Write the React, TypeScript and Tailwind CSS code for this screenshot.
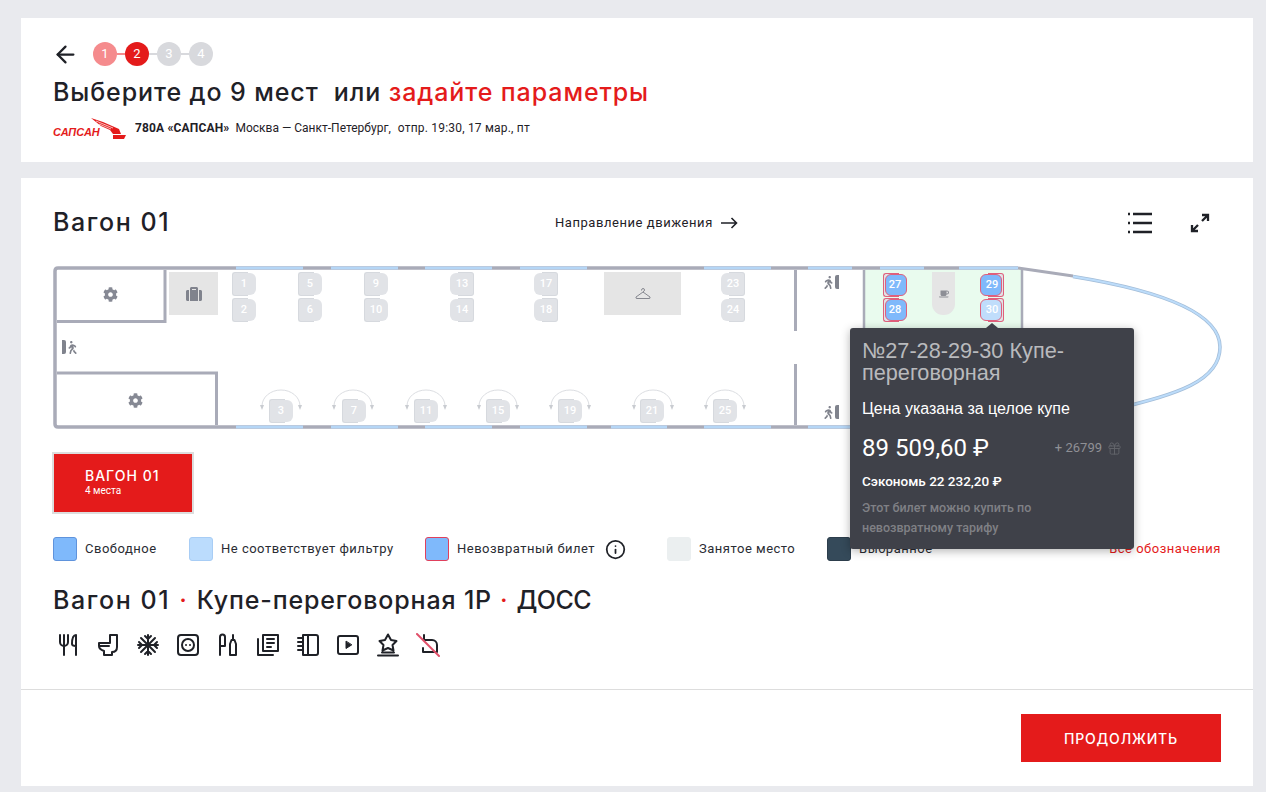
import { FaCog, FaSuitcase, FaWalking, FaCoffee } from "react-icons/fa";
import { ArrowLeft, Gift, Info } from "lucide-react";

const topWindows = [[236, 303], [331, 398], [425, 492], [520, 587], [704, 771], [808, 852], [880, 924], [959, 1018]];
const bottomWindows = [[236, 303], [331, 398], [425, 492], [520, 587], [611, 667], [704, 771], [808, 852]];

type SeatData = { n: number; x: number; y: number; back: "left" | "right"; kind?: "free" | "dim" };

const seats: SeatData[] = [
  { n: 1, x: 232, y: 272, back: "left" },
  { n: 2, x: 232, y: 298, back: "left" },
  { n: 5, x: 298, y: 272, back: "left" },
  { n: 6, x: 298, y: 298, back: "left" },
  { n: 9, x: 364, y: 272, back: "left" },
  { n: 10, x: 364, y: 298, back: "left" },
  { n: 13, x: 450, y: 272, back: "right" },
  { n: 14, x: 450, y: 298, back: "right" },
  { n: 17, x: 534, y: 272, back: "right" },
  { n: 18, x: 534, y: 298, back: "right" },
  { n: 23, x: 721, y: 272, back: "right" },
  { n: 24, x: 721, y: 298, back: "right" },
  { n: 3, x: 269, y: 399, back: "left" },
  { n: 7, x: 342, y: 399, back: "left" },
  { n: 11, x: 414, y: 399, back: "left" },
  { n: 15, x: 486, y: 399, back: "left" },
  { n: 19, x: 558, y: 399, back: "left" },
  { n: 21, x: 640, y: 399, back: "left" },
  { n: 25, x: 713, y: 399, back: "left" },
  { n: 27, x: 883, y: 273, back: "left", kind: "free" },
  { n: 28, x: 883, y: 298, back: "left", kind: "free" },
  { n: 29, x: 980, y: 273, back: "right", kind: "free" },
  { n: 30, x: 980, y: 298, back: "right", kind: "dim" },
];

function Seat({ seat }: { seat: SeatData }) {
  const free = seat.kind === "free";
  const dim = seat.kind === "dim";
  const body = free ? "bg-[#7fb9fb]" : dim ? "bg-[#c0ddfb]" : "bg-[#e1e3e7]";
  const back = free || dim ? "border-[#e0607c]" : "border-[#d6d9de]";
  return (
    <div
      className="absolute w-[24px] h-[24px]"
      style={{ left: seat.x - 53, top: seat.y - 266 }}
    >
      <div className={`absolute top-0 bottom-0 w-[16px] border ${back} ${seat.back === "left" ? "left-0 rounded-l-[3px] border-r-0" : "right-0 rounded-r-[3px] border-l-0"} bg-[#e1e3e7]`} />
      <div className={`absolute top-[1px] bottom-[1px] w-[22px] rounded-[6px] ${free || dim ? "border border-[#e0607c]" : ""} ${body} ${seat.back === "left" ? "right-0" : "left-0"}`} />
      <div className="absolute inset-0 flex items-center justify-center text-white text-[11px] font-['Roboto',sans-serif] font-medium">
        {seat.n}
      </div>
    </div>
  );
}

function SwingArc({ x }: { x: number }) {
  return (
    <g fill="none" stroke="#dcdee2" strokeWidth="1">
      <path d={`M${x - 19} 406 A19 16 0 0 1 ${x + 19} 406`} />
      <path d={`M${x - 21} 405 l2 5 l2 -5 z`} fill="#c9ccd1" stroke="none" />
      <path d={`M${x + 17} 405 l2 5 l2 -5 z`} fill="#c9ccd1" stroke="none" />
    </g>
  );
}

function WagonMap() {
  return (
    <div className="relative w-[1170px] h-[165px] mt-[27px]">
      <svg className="absolute left-0 top-0" width="1170" height="165" viewBox="53 266 1170 165" fill="none">
        <rect x="864" y="269" width="158" height="155" fill="#e9fbee" />
        <path d="M1018 268 L1073 276" stroke="#a9abb8" strokeWidth="3" />
        <path d="M1073 276.500 C1150 289 1220 310 1220 347 C1220 382 1175 394 1120 408" stroke="#a3bdd8" strokeWidth="3.500" />
        <path d="M1073 276.500 C1150 289 1220 310 1220 347 C1220 382 1175 394 1120 408" stroke="#bcdcfa" strokeWidth="2" />
        <path d="M1018 268 H58 Q55 268 55 271 V424 Q55 427 58 427 H1120" stroke="#a9abb8" strokeWidth="3.500" />
        {topWindows.map(([a, b]) => (
          <rect key={a} x={a} y="266.500" width={b - a} height="3" fill="#b5d6f6" />
        ))}
        {bottomWindows.map(([a, b]) => (
          <rect key={a} x={a} y="425.500" width={b - a} height="3" fill="#b5d6f6" />
        ))}
        <path d="M57 321.500 H165 V270" stroke="#a9abb8" strokeWidth="3" />
        <path d="M57 373 H216.500 V425" stroke="#a9abb8" strokeWidth="3" />
        <path d="M795.500 270 V331 M795.500 364 V425" stroke="#a9abb8" strokeWidth="3" />
        <path d="M864 270 V340 M1022 270 V340" stroke="#a9abb8" strokeWidth="2.500" />
        {[281, 353, 426, 498, 570, 653, 725].map((x) => (
          <SwingArc key={x} x={x} />
        ))}
      </svg>

      <div className="absolute left-[116px] top-[6px] w-[49px] h-[43px] bg-[#e5e5e5] flex items-center justify-center">
        <FaSuitcase className="text-[#80838d] text-[16px]" />
      </div>
      <div className="absolute left-[551px] top-[6px] w-[77px] h-[43px] bg-[#e5e5e5] flex items-center justify-center">
        <svg width="16" height="12" viewBox="0 0 16 12" fill="none" stroke="#85878f" strokeWidth="1">
          <path d="M6.500 2.500 Q6.500 .5 8 .5 Q9.500 .5 9.500 2 Q9.500 3 8 4 L1 9 Q.5 10.500 2 10.500 H14 Q15.500 10.500 15 9 L8 4" />
        </svg>
      </div>
      <div className="absolute left-[879px] top-[6px] w-[23px] h-[43px] bg-[#e5e5e5] rounded-b-[11px] flex items-center justify-center">
        <FaCoffee className="text-[#8d8f96] text-[10px]" />
      </div>

      <FaCog className="absolute left-[50px] top-[21px] text-[#868994] text-[15px]" />
      <FaCog className="absolute left-[75px] top-[127px] text-[#868994] text-[15px]" />

      <div className="absolute left-[9px] top-[74px] flex items-center">
        <div className="w-[4px] h-[14px] bg-[#80838d] rounded-r-[2px]" />
        <FaWalking className="text-[#80838d] text-[13px] -scale-x-100" />
      </div>
      <div className="absolute left-[769px] top-[9px] flex items-center">
        <FaWalking className="text-[#80838d] text-[13px]" />
        <div className="w-[4px] h-[14px] bg-[#80838d] rounded-l-[2px]" />
      </div>
      <div className="absolute left-[769px] top-[139px] flex items-center">
        <FaWalking className="text-[#80838d] text-[13px]" />
        <div className="w-[4px] h-[14px] bg-[#80838d] rounded-l-[2px]" />
      </div>

      {seats.map((s) => (
        <Seat key={s.n} seat={s} />
      ))}

      <div className="absolute left-[797px] top-[62px] w-[284px] h-[221px] z-10 bg-[#3f4149] rounded-[3px] shadow-[0_2px_10px_rgba(0,0,0,0.3)] px-[12px] pt-[12px] font-['Roboto',sans-serif]">
        <div className="absolute left-[136px] -top-[5px] w-0 h-0 border-x-[6px] border-x-transparent border-b-[5px] border-b-[#3f4149]" />
        <div className="text-[21.700px] leading-[22px] text-[#b9babd] font-['Liberation_Sans',sans-serif]">№27-28-29-30 Купе-<br />переговорная</div>
        <div className="mt-[15px] text-[16px] leading-[20px] text-white font-['Liberation_Sans',sans-serif]">Цена указана за целое купе</div>
        <div className="mt-[14px] flex items-center justify-between">
          <span className="text-[24px] leading-[30px] text-white">89 509,60 ₽</span>
          <span className="flex items-center gap-[5px] text-[13px] text-[#8f9095]">
            + 26799
            <Gift size={15} strokeWidth={1.500} className="text-[#62646b]" />
          </span>
        </div>
        <div className="mt-[8px] text-[13.500px] leading-[20px] font-medium text-white">Сэкономь 22 232,20 ₽</div>
        <div className="mt-[7px] text-[12.500px] leading-[20px] font-medium text-[#7f8085]">Этот билет можно купить по<br />невозвратному тарифу</div>
      </div>
    </div>
  );
}

function LegendItem({ box, label, className }: { box: string; label: string; className: string }) {
  return (
    <div className={`flex items-center gap-[8px] ${className}`}>
      <div className={`w-[24px] h-[24px] rounded-[3px] border ${box}`} />
      <span className="text-[13px] text-[#2a2c33] tracking-[0.5px]">{label}</span>
    </div>
  );
}

const amenities = [
  { d: "M4 2v7a4 4 0 0 0 8 0V2M8 2v20M20 22V2c-3 0-4 4-4 9 0 1 1 2 4 2" },
  { d: "M14 10V2h7v12c0 3-2 5-5 5v3H8v-4c-3-1-5-3-5-5v-3h11M3 13h10" },
  { d: "M12 2v20M2 12h20M5 5l14 14M19 5L5 19M9 3l3 3 3-3M9 21l3-3 3 3M3 9l3 3-3 3M21 9l-3 3 3 3" },
  { d: "M5 2h14a3 3 0 0 1 3 3v14a3 3 0 0 1-3 3H5a3 3 0 0 1-3-3V5a3 3 0 0 1 3-3zM12 6a6 6 0 1 0 0 12a6 6 0 1 0 0-12M10 12h.01M14 12h.01" },
  { d: "M4 22V4a2.500 2.500 0 0 1 5 0v9H4M17 2v5M14 11l1.500-4h3L20 11v11h-6z" },
  { d: "M7 2h15v16H7zM2 6v16h15M11 6h7M11 10h7M11 14h4" },
  { d: "M7 2h13a2 2 0 0 1 2 2v16a2 2 0 0 1-2 2H7zM12 2v20M2 5h5M2 9h5M2 13h5M2 17h5" },
  { d: "M4 3h16a2 2 0 0 1 2 2v14a2 2 0 0 1-2 2H4a2 2 0 0 1-2-2V5a2 2 0 0 1 2-2z", tri: true },
  { d: "M12 1.500l3 5.500 5.500 1-4 4 1 5.500-5.500-2.500-5.500 2.500 1-5.500-4-4 5.500-1zM6 19.500h12M2 22.500h20" },
];

function Amenity({ d, tri }: { d: string; tri?: boolean }) {
  return (
    <svg width="24" height="24" viewBox="0 0 24 24" fill="none" stroke="#1f2127" strokeWidth="2" strokeLinejoin="round" strokeLinecap="round">
      <path d={d} />
      {tri && <path d="M10 8.500v7l5.500-3.500z" fill="#1f2127" strokeWidth="1" />}
    </svg>
  );
}

export default function App() {
  return (
    <div className="min-h-[792px] bg-[#e9eaee] pl-[21px] pr-[13px] pt-[18px] flex flex-col gap-[16px] font-['Roboto',sans-serif] text-[#1f2127] overflow-hidden">
      <div className="h-[144px] bg-white px-[32px] pt-[24px]">
        <div className="flex items-center h-[24px]">
          <ArrowLeft size={27} strokeWidth={2} className="-ml-[1px] mr-[14px]" />
          <div className="flex items-center">
            <div className="w-[24px] h-[24px] rounded-full bg-[#f58b8d] text-white text-[13px] flex items-center justify-center">1</div>
            <div className="w-[8px] h-[2px] bg-[#f58b8d]" />
            <div className="w-[24px] h-[24px] rounded-full bg-[#e41b1b] text-white text-[13px] flex items-center justify-center">2</div>
            <div className="w-[8px] h-[2px] bg-[#d8d9dd]" />
            <div className="w-[24px] h-[24px] rounded-full bg-[#d8d9dd] text-white text-[13px] flex items-center justify-center">3</div>
            <div className="w-[8px] h-[2px] bg-[#d8d9dd]" />
            <div className="w-[24px] h-[24px] rounded-full bg-[#d8d9dd] text-white text-[13px] flex items-center justify-center">4</div>
          </div>
        </div>
        <h1 className="mt-[10px] text-[25px] leading-[32px] tracking-[0.9px] font-medium font-['Inter',sans-serif] whitespace-pre">
          Выберите до 9 мест  или <span className="text-[#e41b1b]">задайте параметры</span>
        </h1>
        <div className="mt-[9px] flex items-center h-[22px]">
          <div className="relative w-[74px] h-[22px] mr-[8px]">
            <span className="absolute left-0 top-[8px] text-[11px] leading-[14px] font-bold italic text-[#e41b1b] font-['Liberation_Sans',sans-serif]">САПСАН</span>
            <svg className="absolute left-[36px] top-0" width="38" height="22" viewBox="0 0 38 22" fill="#e41b1b">
              <path d="M2 1 L14 5 L30 12 L32 17 L24 17 L21 13 L12 9 Z" />
              <path d="M7 4 L24 11 M10 7 L22 12" stroke="#ffffff" strokeWidth="0.700" />
              <path d="M24 18 H37 L35 22 H24 Z" />
            </svg>
          </div>
          <span className="text-[12px] font-bold tracking-[0.15px]">780А «САПСАН»</span>
          <span className="ml-[6px] text-[12px]">Москва — Санкт-Петербург,</span>
          <span className="ml-[7px] text-[12px] tracking-[0.2px]">отпр. 19:30, 17 мар., пт</span>
        </div>
      </div>

      <div className="h-[608px] bg-white flex flex-col">
        <div className="px-[32px] pt-[29px] flex-1">
          <div className="relative flex items-center justify-between h-[32px]">
            <h2 className="text-[25px] tracking-[1.600px] font-medium font-['Inter',sans-serif]">Вагон 01</h2>
            <div className="absolute left-[502px] flex items-center gap-[8px] text-[13px] tracking-[0.55px]">
              Направление движения
              <svg width="17" height="12" viewBox="0 0 17 12" fill="none" stroke="#1f2127" strokeWidth="1.600">
                <path d="M0 6h15.500M10.500 1l5 5-5 5" />
              </svg>
            </div>
            <div className="flex items-center gap-[36px] mr-[10px]">
              <svg width="26" height="22" viewBox="0 0 26 22" stroke="#1f2127" strokeWidth="2.500">
                <path d="M1 2h2M1 11h2M1 20h2M6 2h19M6 11h19M6 20h19" />
              </svg>
              <svg width="22" height="22" viewBox="0 0 22 22" fill="none" stroke="#1f2127" strokeWidth="2.300">
                <path d="M13 3h6v6M19 3l-6 6M3 13v6h6M3 19l6-6" />
              </svg>
            </div>
          </div>

          <WagonMap />

          <div className="mt-[21px] -ml-[1px] w-[142px] h-[62px] border-2 border-[#dddddd] bg-[#e41b1b] text-white pl-[31px] pt-[13px]">
            <div className="text-[14px] leading-[18px] tracking-[1px] font-medium font-['Inter',sans-serif]">ВАГОН 01</div>
            <div className="text-[10px] leading-[12px]">4 места</div>
          </div>

          <div className="relative mt-[23px] flex items-center h-[24px]">
            <LegendItem className="w-[136px]" box="bg-[#7fb9fb] border-[#5f93dc]" label="Свободное" />
            <LegendItem className="w-[236px]" box="bg-[#bbdcfd] border-[#a8cdf5]" label="Не соответствует фильтру" />
            <LegendItem className="" box="bg-[#7fb9fb] border-[#e0405c]" label="Невозвратный билет" />
            <Info size={21} strokeWidth={2} className="ml-[10px] mr-[41px] text-[#1f2127]" />
            <LegendItem className="w-[160px]" box="bg-[#ebeff0] border-[#ebeff0]" label="Занятое место" />
            <LegendItem className="" box="bg-[#354a5a] border-[#2d3e4c]" label="Выбранное" />
            <span className="ml-auto text-[13px] tracking-[0.5px] text-[#e41b1b]">Все обозначения</span>
          </div>

          <h2 className="mt-[23px] text-[25px] leading-[32px] tracking-[0.85px] font-medium font-['Inter',sans-serif]">
            <span className="tracking-[1.600px]">Вагон 01</span>
            <span className="text-[#e41b1b] mx-[9px]">·</span>Купе-переговорная 1Р<span className="text-[#e41b1b] mx-[8px]">·</span>
            <span className="tracking-[-0.5px]">ДОСС</span>
          </h2>

          <div className="mt-[17px] flex items-center gap-[16px] ml-[3px]">
            {amenities.map((a) => (
              <Amenity key={a.d} d={a.d} tri={a.tri} />
            ))}
            <svg width="24" height="24" viewBox="0 0 24 24" fill="none" strokeWidth="2" strokeLinejoin="round" strokeLinecap="round">
              <path d="M8 2v5h8a5 5 0 0 1 5 5v7H7v-4" stroke="#1f2127" />
              <path d="M1 1L23 23" stroke="#e0506a" />
            </svg>
          </div>
        </div>

        <div className="h-[97px] border-t border-[#dddddd] flex items-start justify-end pt-[24px] pr-[32px]">
          <button className="w-[200px] h-[48px] bg-[#e41b1b] text-white text-[14px] font-medium tracking-[0.8px] font-['Inter',sans-serif]">ПРОДОЛЖИТЬ</button>
        </div>
      </div>
    </div>
  );
}
